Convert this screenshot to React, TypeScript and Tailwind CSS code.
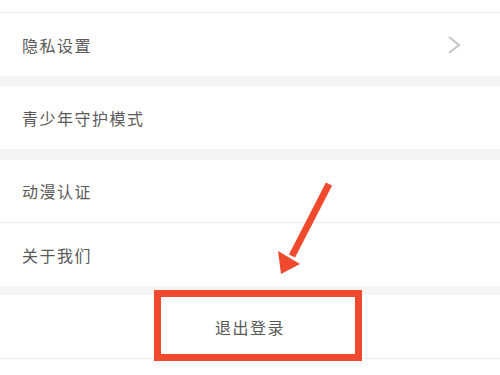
import React from "react";

const font = { fontFamily: '"Noto Sans CJK SC", "Noto Sans", sans-serif' };

function Row({ label, chevron, border }: { label: string; chevron?: boolean; border?: boolean }) {
  return (
    <div className={`h-[63px] bg-white flex items-center justify-between pl-[22px] pr-[38px] ${border ? "border-b border-[#efefef]" : ""}`}>
      <span className="text-[16px] tracking-[1.5px] text-[#5a5a5a]">{label}</span>
      {chevron && (
        <svg width="16" height="22" viewBox="0 0 16 22">
          <path d="M3 3 L13 11 L3 19" fill="none" stroke="#c4c4c4" strokeWidth="2" />
        </svg>
      )}
    </div>
  );
}

export default function App() {
  return (
    <div className="relative w-[500px] h-[375px] overflow-hidden bg-white" style={font}>
      <div className="flex flex-col">
        <div className="h-[13px] bg-white border-b border-[#efefef] overflow-hidden pl-[22px]">
          <div className="-mt-[21px] text-[16px] tracking-[1.5px] text-[#ccc]">账号与安全设置</div>
        </div>
        <Row label="隐私设置" chevron />
        <div className="h-[10px] bg-[#f4f4f4]" />
        <Row label="青少年守护模式" />
        <div className="h-[11px] bg-[#f4f4f4]" />
        <Row label="动漫认证" border />
        <Row label="关于我们" />
        <div className="h-[9px] bg-[#f4f4f4]" />
        <div className="h-[64px] bg-white border-b border-[#efefef] flex items-center justify-center">
          <span className="text-[16px] tracking-[1.5px] text-[#5a5a5a]">退出登录</span>
        </div>
      </div>
      <div className="absolute left-[154px] top-[290px] w-[208px] h-[71px] border-[7px] border-[#f04a2e]" />
      <svg className="absolute left-0 top-0" width="500" height="375" viewBox="0 0 500 375">
        <line x1="329" y1="184" x2="292" y2="256" stroke="#f04a2e" strokeWidth="7" />
        <polygon points="281,274 278,251 300,264" fill="#f04a2e" />
      </svg>
    </div>
  );
}
